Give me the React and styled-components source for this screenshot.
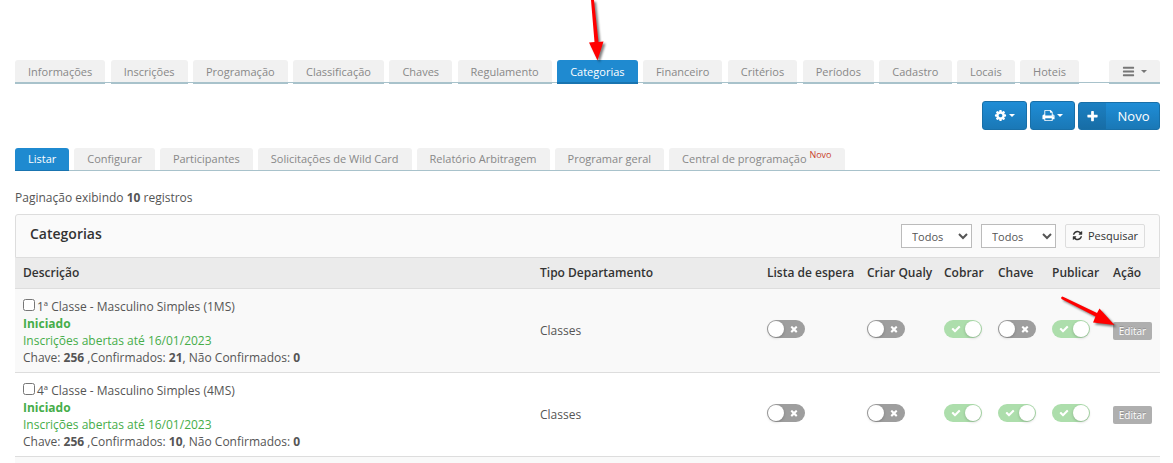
import React from "react";
import styled, { createGlobalStyle, css } from "styled-components";

const GlobalStyle = createGlobalStyle`
  *, *::before, *::after { box-sizing: border-box; }
  body {
    margin: 0;
    background: #fff;
    color: #555;
    font-family: "Open Sans", "Liberation Sans", sans-serif;
    font-size: 12px;
    line-height: 17px;
  }
  button, select, input { font-family: inherit; margin: 0; }
`;

const PATHS = {
  cog: "M1152 896q0-106-75-181t-181-75-181 75-75 181 75 181 181 75 181-75 75-181zm512-109v222q0 12-8 23t-20 13l-185 28q-19 54-39 91 35 50 107 138 10 12 10 25t-9 23q-27 37-99 108t-94 71q-12 0-26-9l-138-108q-44 23-91 38-16 136-29 186-7 28-36 28h-222q-14 0-24.5-8.500t-11.500-21.500l-28-184q-49-16-90-37l-141 107q-10 9-25 9-14 0-25-11-126-114-165-168-7-10-7-23 0-12 8-23 15-21 51-66.500t54-70.500q-27-50-41-99l-183-27q-13-2-21-12.500t-8-23.500v-222q0-12 8-23t19-13l186-28q14-46 39-92-40-57-107-138-10-12-10-24 0-10 9-23 26-36 98.500-107.500t94.500-71.500q13 0 26 10l138 107q44-23 91-38 16-136 29-186 7-28 36-28h222q14 0 24.500 8.500t11.500 21.500l28 184q49 16 90 37l142-107q9-9 24-9 13 0 25 10 129 119 165 170 7 8 7 22 0 12-8 23-15 21-51 66.500t-54 70.500q26 50 41 98l183 28q13 2 21 12.500t8 23.500z",
  print: "M448 1536h896v-256h-896v256zm0-640h896v-384h-160q-40 0-68-28t-28-68v-160h-640v640zm1152 64q0-26-19-45t-45-19-45 19-19 45 19 45 45 19 45-19 19-45zm128 0v416q0 13-9.500 22.500t-22.500 9.500h-224v160q0 40-28 68t-68 28h-960q-40 0-68-28t-28-68v-160h-224q-13 0-22.500-9.500t-9.500-22.500v-416q0-79 56.500-135.500t135.500-56.500h64v-544q0-40 28-68t68-28h672q40 0 88 20t76 48l152 152q28 28 48 76t20 88v256h64q79 0 135.500 56.500t56.500 135.500z",
  refresh: "M1639 1056q0 5-1 7-64 268-268 434.500t-478 166.500q-146 0-282.500-55t-243.500-157l-129 129q-19 19-45 19t-45-19-19-45v-448q0-26 19-45t45-19h448q26 0 45 19t19 45-19 45l-137 137q71 66 161 102t187 36q134 0 250-65t186-179q11-17 53-117 8-23 30-23h192q13 0 22.500 9.500t9.500 22.500zm25-800v448q0 26-19 45t-45 19h-448q-26 0-45-19t-19-45 19-45l138-138q-148-137-349-137-134 0-250 65t-186 179q-11 17-53 117-8 23-30 23h-199q-13 0-22.500-9.500t-9.500-22.500v-7q65-268 270-434.500t480-166.500q146 0 284 55.500t245 156.500l130-129q19-19 45-19t45 19 19 45z",
  plus: "M1600 736v192q0 40-28 68t-68 28h-416v416q0 40-28 68t-68 28h-192q-40 0-68-28t-28-68v-416h-416q-40 0-68-28t-28-68v-192q0-40 28-68t68-28h416v-416q0-40 28-68t68-28h192q40 0 68 28t28 68v416h416q40 0 68 28t28 68z",
  check: "M1671 566q0 40-28 68l-724 724-136 136q-28 28-68 28t-68-28l-136-136-362-362q-28-28-28-68t28-68l136-136q28-28 68-28t68 28l294 295 656-657q28-28 68-28t68 28l136 136q28 28 28 68z",
  times: "M1490 1322q0 40-28 68l-136 136q-28 28-68 28t-68-28l-294-294-294 294q-28 28-68 28t-68-28l-136-136q-28-28-28-68t28-68l294-294-294-294q-28-28-28-68t28-68l136-136q28-28 68-28t68 28l294 294 294-294q28-28 68-28t68 28l136 136q28 28 28 68t-28 68l-294 294 294 294q28 28 28 68z",
  bars: "M1664 1344v128q0 26-19 45t-45 19h-1408q-26 0-45-19t-19-45v-128q0-26 19-45t45-19h1408q26 0 45 19t19 45zm0-512v128q0 26-19 45t-45 19h-1408q-26 0-45-19t-19-45v-128q0-26 19-45t45-19h1408q26 0 45 19t19 45zm0-512v128q0 26-19 45t-45 19h-1408q-26 0-45-19t-19-45v-128q0-26 19-45t45-19h1408q26 0 45 19t19 45z",
};

const Icon = ({ name, size = 14, className }) => (
  <svg className={className} width={size} height={size} viewBox="0 0 1792 1792" fill="currentColor" aria-hidden="true">
    <path d={PATHS[name]} />
  </svg>
);

const Page = styled.main`
  padding: 60px 13px 0 15px;
`;

const TabBar = styled.nav`
  display: flex;
  align-items: flex-start;
  gap: 30px;
  height: 23px;
  border-bottom: 1px solid #a8c2cb;
`;

const TabGroup = styled.div`
  display: flex;
  flex: 1;
  gap: 5px;
  justify-content: ${(p) => (p.$spread ? "space-between" : "flex-start")};
`;

const Tab = styled.a`
  position: relative;
  flex: none;
  height: ${(p) => (p.$overhang ? 24 : 22)}px;
  padding: ${(p) => (p.$overhang ? 4 : 3)}px 13px 0;
  border-radius: 3px 3px 0 0;
  background: #f1f1f1;
  color: #888;
  font-size: 11px;
  line-height: 16px;
  text-decoration: none;
  white-space: nowrap;
  ${(p) => p.$overhang && css`border-bottom: 2px solid #a8c2cb;`}
  ${(p) => p.$active && css`
    background: #1f8ad0;
    color: #fff;
    height: ${p.$overhang ? 24 : 23}px;
    border-bottom: ${p.$overhang ? 2 : 1}px solid #1974b0;
  `}
  sup {
    color: #c9422b;
    font-size: 9px;
    line-height: 0;
  }
`;

const MenuTab = styled.button`
  display: flex;
  align-items: center;
  justify-content: center;
  gap: 6px;
  flex: none;
  width: 51px;
  height: 24px;
  padding: 0;
  border: 0;
  border-bottom: 2px solid #a8c2cb;
  border-radius: 3px 3px 0 0;
  background: #f1f1f1;
  color: #777;
`;

const Caret = styled.span`
  border: 3px solid transparent;
  border-top-color: currentColor;
  border-bottom-width: 0;
`;

const Actions = styled.div`
  display: flex;
  justify-content: flex-end;
  align-items: flex-end;
  gap: 3px;
  margin: 18px 0;
`;

const PrimaryButton = styled.button`
  display: flex;
  align-items: center;
  justify-content: center;
  width: ${(p) => (p.$split ? 82 : 45)}px;
  height: ${(p) => (p.$split ? 28 : 29)}px;
  gap: 2px;
  padding: 0;
  overflow: hidden;
  border: 1px solid #186fa8;
  border-radius: 3px;
  background: linear-gradient(#1f8dd6, #1a78b6);
  color: #fff;
  font-size: 13px;
  line-height: 18px;
`;

const ButtonIcon = styled.span`
  display: flex;
  align-items: center;
  justify-content: center;
  align-self: stretch;
  width: 27px;
  background: rgba(0, 0, 0, 0.09);
`;

const ButtonLabel = styled.span`
  flex: 1;
  text-align: center;
`;

const Paging = styled.p`
  margin: 18px 0 8px;
`;

const Panel = styled.section`
  border-radius: 3px 3px 0 0;
`;

const PanelHeader = styled.header`
  display: flex;
  align-items: center;
  height: 44px;
  padding: 0 14px;
  border: 1px solid #ddd;
  border-radius: 3px 3px 0 0;
  background: #fafafa;
`;

const PanelTitle = styled.h2`
  flex: 1;
  margin: 0;
  padding-bottom: 4px;
  color: #333;
  font-size: 14px;
  line-height: 18px;
  font-weight: 600;
`;

const Select = styled.select`
  width: ${(p) => p.$width}px;
  height: 24px;
  margin-right: 9px;
  padding: 0 6px;
  border: 1px solid #bbb;
  border-radius: 0;
  background: #fff;
  color: #555;
  font-size: 11px;
`;

const SearchButton = styled.button`
  display: flex;
  align-items: center;
  justify-content: center;
  gap: 5px;
  width: 80px;
  height: 24px;
  padding: 0 0 1px;
  border: 1px solid #ddd;
  border-radius: 2px;
  background: #fafafa;
  color: #333;
  font-size: 11px;
`;

const Table = styled.table`
  width: 100%;
  table-layout: fixed;
  border-collapse: collapse;
`;

const HeadCell = styled.th`
  width: ${(p) => p.$width || "auto"};
  height: 30px;
  padding: 0 0 1px 8px;
  border-bottom: 1px solid #ddd;
  background: #ebebeb;
  color: #333;
  font-weight: 600;
  text-align: left;
  white-space: nowrap;
`;

const Row = styled.tr`
  background: #fff;
  &:nth-child(odd) { background: #f9f9f9; }
`;

const Cell = styled.td`
  position: relative;
  height: ${(p) => (p.$short ? "12px" : "auto")};
  padding: 8px 0 8px 8px;
  border-bottom: 1px solid #ddd;
`;

const SummaryCell = styled(Cell)`
  padding: 9px 0 6px 8px;
`;

const ControlCell = styled(Cell)`
  padding: 7px 0 9px 8px;
`;

const NameLabel = styled.label`
  display: flex;
  align-items: center;
  gap: 2px;
  input { width: 12px; height: 12px; margin-bottom: 3px; }
`;

const Status = styled.div`
  color: #46ad4a;
  font-weight: ${(p) => (p.$strong ? 700 : 400)};
`;

const SwitchLabel = styled.label`
  position: relative;
  display: block;
  width: 38px;
  height: 18px;
  color: #fff;
  svg {
    position: absolute;
    top: 4px;
    left: ${(p) => (p.$on ? 7 : 22)}px;
    pointer-events: none;
  }
`;

const SwitchInput = styled.input`
  appearance: none;
  display: block;
  width: 38px;
  height: 18px;
  padding-top: 1px;
  border-radius: 9px;
  background: #9e9e9e;
  &::before {
    content: "";
    display: block;
    width: 16px;
    height: 16px;
    margin: 0 1px;
    border-radius: 50%;
    background: #fff;
    box-shadow: 0 1px 3px rgba(0, 0, 0, 0.2);
  }
  &:checked { background: #addeac; }
  &:checked::before { margin-left: 21px; }
`;

const EditButton = styled.button`
  display: block;
  width: 39px;
  height: 18px;
  margin-top: 4px;
  padding: 0;
  border: 0;
  border-radius: 2px;
  background: #afafaf;
  color: #fff;
  font-size: 10px;
  line-height: 18px;
  text-shadow: 0 -1px 0 rgba(0, 0, 0, 0.2);
`;

const Pointer = styled.svg`
  position: absolute;
  pointer-events: none;
  overflow: visible;
  filter: drop-shadow(2px 2px 1px rgba(0, 0, 0, 0.5));
`;

const TabPointer = styled(Pointer)`
  left: 31px;
  top: -60px;
`;

const EditPointer = styled(Pointer)`
  left: -45px;
  top: 7px;
`;

const Toggle = ({ label, initial }) => {
  const [on, setOn] = React.useState(initial);
  return (
    <SwitchLabel $on={on}>
      <SwitchInput type="checkbox" role="switch" aria-label={label} checked={on} onChange={() => setOn(!on)} />
      <Icon name={on ? "check" : "times"} size={10} />
    </SwitchLabel>
  );
};

const mainTabs = ["Informações", "Inscrições", "Programação", "Classificação", "Chaves", "Regulamento", "Categorias", "Financeiro", "Critérios", "Períodos", "Cadastro", "Locais", "Hoteis"];
const subTabs = ["Listar", "Configurar", "Participantes", "Solicitações de Wild Card", "Relatório Arbitragem", "Programar geral"];
const flags = ["Lista de espera", "Criar Qualy", "Cobrar", "Chave", "Publicar"];
const flagWidths = ["100px", "77px", "54px", "54px", "61px"];
const rows = [
  { name: "1ª Classe - Masculino Simples (1MS)", confirmed: 21, flags: [false, false, true, false, true] },
  { name: "4ª Classe - Masculino Simples (4MS)", confirmed: 10, flags: [false, false, true, true, true] },
];

export default function App() {
  return (
    <>
      <GlobalStyle />
      <Page>
        <TabBar aria-label="Torneio">
          <TabGroup $spread>
            {mainTabs.map((t) => (
              <Tab key={t} href="#" $overhang $active={t === "Categorias"}>
                {t}
                {t === "Categorias" && (
                  <TabPointer width="18" height="61" viewBox="0 0 18 61" aria-hidden="true">
                    <path d="M3 0H6L10.500 42L15.500 41.500L9.500 60.500L1 42.500L6.500 42Z" fill="#f00" />
                  </TabPointer>
                )}
              </Tab>
            ))}
          </TabGroup>
          <MenuTab type="button" aria-label="Menu">
            <Icon name="bars" size={13} />
            <Caret />
          </MenuTab>
        </TabBar>

        <Actions>
          <PrimaryButton type="button" aria-label="Configurações"><Icon name="cog" size={13} /><Caret /></PrimaryButton>
          <PrimaryButton type="button" aria-label="Imprimir"><Icon name="print" size={13} /><Caret /></PrimaryButton>
          <PrimaryButton type="button" $split>
            <ButtonIcon><Icon name="plus" size={13} /></ButtonIcon>
            <ButtonLabel>Novo</ButtonLabel>
          </PrimaryButton>
        </Actions>

        <TabBar aria-label="Categorias">
          <TabGroup>
            {subTabs.map((t) => (
              <Tab key={t} href="#" $active={t === "Listar"}>{t}</Tab>
            ))}
            <Tab href="#">Central de programação <sup>Novo</sup></Tab>
          </TabGroup>
        </TabBar>

        <Paging>Paginação exibindo <b>10</b> registros</Paging>

        <Panel>
          <PanelHeader>
            <PanelTitle>Categorias</PanelTitle>
            <Select $width={71} aria-label="Tipo"><option>Todos</option></Select>
            <Select $width={75} aria-label="Situação"><option>Todos</option></Select>
            <SearchButton type="button"><Icon name="refresh" size={11} />Pesquisar</SearchButton>
          </PanelHeader>
          <Table>
            <thead>
              <tr>
                <HeadCell>Descrição</HeadCell>
                <HeadCell $width="227px">Tipo Departamento</HeadCell>
                {flags.map((f, i) => <HeadCell key={f} $width={flagWidths[i]}>{f}</HeadCell>)}
                <HeadCell $width="55px">Ação</HeadCell>
              </tr>
            </thead>
            <tbody>
              {rows.map((r, n) => (
                <Row key={r.name}>
                  <SummaryCell>
                    <NameLabel><input type="checkbox" />{r.name}</NameLabel>
                    <Status $strong>Iniciado</Status>
                    <Status>Inscrições abertas até 16/01/2023</Status>
                    <div>Chave: <b>256</b> ,Confirmados: <b>{r.confirmed}</b>, Não Confirmados: <b>0</b></div>
                  </SummaryCell>
                  <Cell>Classes</Cell>
                  {r.flags.map((on, i) => (
                    <ControlCell key={flags[i]}><Toggle label={flags[i]} initial={on} /></ControlCell>
                  ))}
                  <ControlCell>
                    <EditButton type="button">Editar</EditButton>
                    {n === 0 && (
                      <EditPointer width="56" height="32" viewBox="0 0 56 32" aria-hidden="true">
                        <path d="M2.500 0.500L37 17L39.500 12.500L54.500 29L33 26.500L35.500 20.500L1.500 3Q0.500 1 2.500 0.500Z" fill="#f00" />
                      </EditPointer>
                    )}
                  </ControlCell>
                </Row>
              ))}
              <Row><Cell $short colSpan={8} /></Row>
            </tbody>
          </Table>
        </Panel>
      </Page>
    </>
  );
}
